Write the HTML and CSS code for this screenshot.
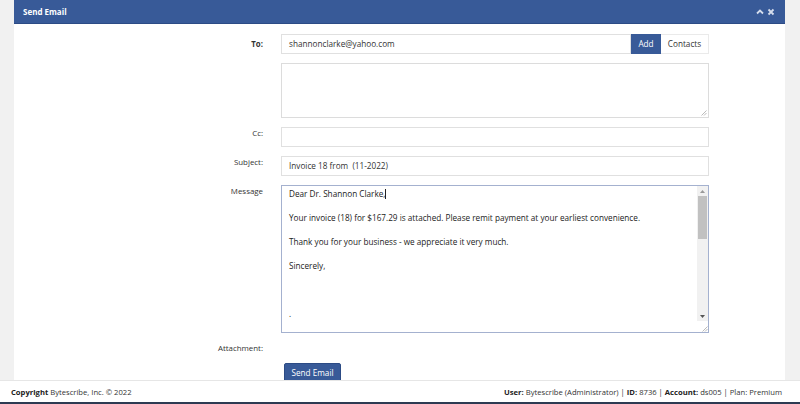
FILE: index.html
```html
<!DOCTYPE html>
<html>
<head>
<meta charset="utf-8">
<link rel="stylesheet" href="styles.css">
</head>
<body>
<div class="page">
  <div class="panel">
    <div class="panel-header">
      <span class="panel-title">Send Email</span>
      <span class="panel-tools">
        <svg class="tool" width="8" height="8" viewBox="0 0 8 8"><path d="M1 5.5 L4 2.5 L7 5.5" fill="none" stroke="#d5ddec" stroke-width="1.8"/></svg>
        <svg class="tool" width="8" height="8" viewBox="0 0 8 8"><path d="M1.5 1.5 L6.5 6.5 M6.5 1.5 L1.5 6.5" fill="none" stroke="#d5ddec" stroke-width="1.8"/></svg>
      </span>
    </div>
    <div class="form">
      <div class="label bold">To:</div>
      <div class="field to-row">
        <div class="input to-input">shannonclarke@yahoo.com</div>
        <div class="btn-add">Add</div>
        <div class="btn-contacts">Contacts</div>
      </div>

      <div class="label"></div>
      <div class="field">
        <div class="textbox">
          <svg class="grip" width="6" height="6" viewBox="0 0 6 6"><path d="M0.5 5.5 L5.5 0.5 M3 5.5 L5.5 3" stroke="#aaa" stroke-width="0.8"/></svg>
        </div>
      </div>

      <div class="label">Cc:</div>
      <div class="field"><div class="input"></div></div>

      <div class="label">Subject:</div>
      <div class="field"><div class="input">Invoice 18 from&nbsp; (11-2022)</div></div>

      <div class="label">Message</div>
      <div class="field">
        <div class="message">
          <div class="message-text">
            <p>Dear Dr. Shannon Clarke,<span class="caret"></span></p>
            <p>&nbsp;</p>
            <p>Your invoice (18) for $167.29 is attached. Please remit payment at your earliest convenience.</p>
            <p>&nbsp;</p>
            <p>Thank you for your business - we appreciate it very much.</p>
            <p>&nbsp;</p>
            <p>Sincerely,</p>
            <p>&nbsp;</p>
            <p>&nbsp;</p>
            <p>&nbsp;</p>
            <p>.</p>
          </div>
          <div class="scrollbar">
            <div class="sb-arrow"><svg width="5" height="3" viewBox="0 0 5 3"><path d="M0 3 L2.5 0 L5 3Z" fill="#999"/></svg></div>
            <div class="sb-track"><div class="sb-thumb"></div></div>
            <div class="sb-arrow"><svg width="5" height="3" viewBox="0 0 5 3"><path d="M0 0 L2.5 3 L5 0Z" fill="#555"/></svg></div>
            <div class="sb-corner"><svg width="6" height="6" viewBox="0 0 6 6"><path d="M0.5 5.5 L5.5 0.5 M3 5.5 L5.5 3" stroke="#aaa" stroke-width="0.8"/></svg></div>
          </div>
        </div>
      </div>

      <div class="label">Attachment:</div>
      <div class="field attach"></div>

      <div class="label"></div>
      <div class="field"><div class="btn-send">Send Email</div></div>
    </div>
  </div>
</div>
<div class="footer">
  <div><b>Copyright</b> Bytescribe, Inc. © 2022</div>
  <div><b>User:</b> Bytescribe (Administrator) | <b>ID:</b> 8736 | <b>Account:</b> ds005 | Plan: Premium</div>
</div>
</body>
</html>
```
FILE: styles.css
```css
html, body {
  margin: 0;
  padding: 0;
}
body {
  width: 800px;
  height: 404px;
  overflow: hidden;
  display: flex;
  flex-direction: column;
  font-family: "Open Sans", "Noto Sans", sans-serif;
  color: #333;
  background: #f1f1f1;
}
.page {
  flex: 1;
  min-height: 0;
  display: flex;
  padding: 0 15px 0 14px;
  overflow: hidden;
}
.panel {
  flex: 1;
  background: #fff;
  display: flex;
  flex-direction: column;
}
.panel-header {
  height: 23px;
  border-bottom: 1px solid #2c4b85;
  background: #385a98;
  display: flex;
  align-items: center;
  justify-content: space-between;
  padding: 0 10px 0 9px;
  flex-shrink: 0;
}
.panel-title {
  color: #fff;
  font-weight: 700;
  font-size: 8px;
}
.panel-tools {
  display: flex;
  gap: 3px;
  align-items: center;
}
.tool {
  display: block;
}
.form {
  display: grid;
  grid-template-columns: 249px 428px;
  column-gap: 18px;
  row-gap: 9px;
  padding-top: 10px;
}
.label {
  text-align: right;
  font-size: 7.9px;
  padding-top: 1px;
  line-height: 10px;
  color: #333;
}
.label.bold {
  font-weight: 700;
  padding-top: 5px;
}
.field {
  min-width: 0;
}
.to-row {
  display: flex;
  height: 20px;
}
.input {
  box-sizing: border-box;
  height: 20px;
  border: 1px solid #e0e0e0;
  font-size: 8.2px;
  line-height: 18px;
  padding: 0 7px;
  color: #333;
  background: #fff;
}
.to-input {
  flex: 1;
}
.btn-add {
  width: 30px;
  background: #385a98;
  color: #fff;
  font-size: 8.2px;
  line-height: 20px;
  text-align: center;
}
.btn-contacts {
  box-sizing: border-box;
  width: 48px;
  border: 1px solid #eaeaea;
  border-left: none;
  font-size: 8.2px;
  line-height: 18px;
  text-align: center;
  color: #333;
}
.textbox {
  box-sizing: border-box;
  height: 55px;
  border: 1px solid #dcdcdc;
  display: flex;
  align-items: flex-end;
  justify-content: flex-end;
  padding: 0 1px 1px 0;
}
.grip {
  display: block;
}
.message {
  box-sizing: border-box;
  height: 148px;
  border: 1px solid #a4b1cf;
  display: flex;
}
.message-text {
  flex: 1;
  padding: 2px 8px 0 7px;
  font-size: 8.2px;
  line-height: 12px;
  color: #222;
  overflow: hidden;
}
.message-text p {
  margin: 0;
  white-space: nowrap;
}
.caret {
  display: inline-block;
  width: 0;
  height: 10px;
  border-left: 1px solid #222;
  vertical-align: -2px;
}
.scrollbar {
  width: 11px;
  background: #f1f1f1;
  display: flex;
  flex-direction: column;
}
.sb-arrow {
  height: 10px;
  display: flex;
  align-items: center;
  justify-content: center;
}
.sb-track {
  flex: 1;
  display: flex;
  flex-direction: column;
}
.sb-thumb {
  margin: 0 1px;
  height: 43px;
  background: #c1c1c1;
}
.sb-corner {
  height: 11px;
  background: #fff;
  display: flex;
  align-items: flex-end;
  justify-content: flex-end;
}
.attach {
  height: 12px;
}
.btn-send {
  margin-left: 3px;
  width: 57px;
  box-sizing: border-box;
  height: 22px;
  background: #385a98;
  border: 1px solid #2c4b85;
  border-radius: 2px;
  color: #fff;
  font-size: 8.2px;
  line-height: 18px;
  text-align: center;
}
.footer {
  flex-shrink: 0;
  height: 21px;
  background: #fff;
  border-top: 1px solid #e6e6e6;
  border-bottom: 2px solid #2d3a52;
  display: flex;
  align-items: center;
  justify-content: space-between;
  padding: 0 18px 0 11px;
  font-size: 7.65px;
  color: #333;
}
.footer b {
  font-weight: 700;
  color: #222;
}
```
